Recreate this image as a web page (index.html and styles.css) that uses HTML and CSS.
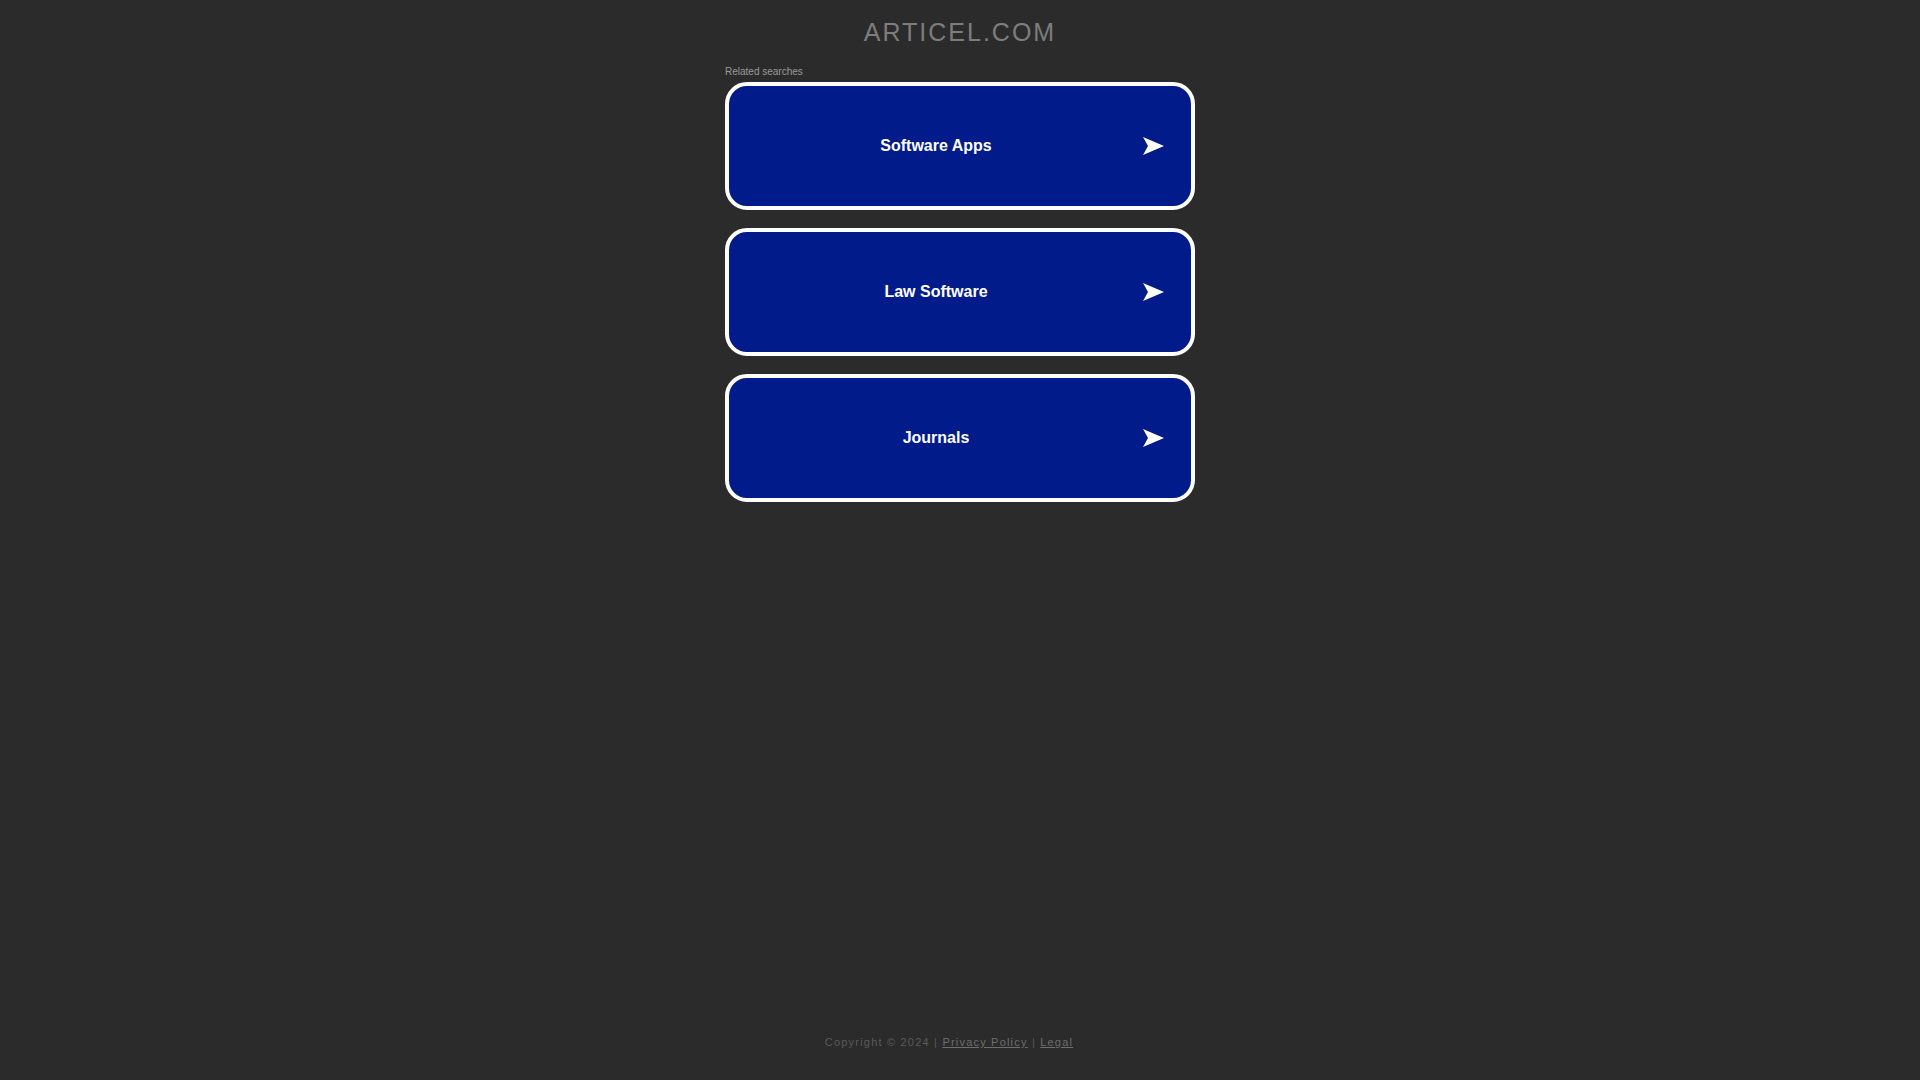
FILE: index.html
```html
<!DOCTYPE html>
<html lang="en">
<head>
<meta charset="utf-8">
<title>articel.com</title>
<link rel="stylesheet" href="styles.css">
</head>
<body>
<div class="page">
  <h1 class="title">ARTICEL.COM</h1>
  <main class="content">
    <div class="label">Related searches</div>
    <div class="list">
      <a class="item" href="#"><span class="item-text">Software Apps</span><svg class="arrow" viewBox="0 0 21 18" width="21" height="18"><path d="M0 0 L21 9 L0 18 L5 9 Z" fill="#fff"/></svg></a>
      <a class="item" href="#"><span class="item-text">Law Software</span><svg class="arrow" viewBox="0 0 21 18" width="21" height="18"><path d="M0 0 L21 9 L0 18 L5 9 Z" fill="#fff"/></svg></a>
      <a class="item" href="#"><span class="item-text">Journals</span><svg class="arrow" viewBox="0 0 21 18" width="21" height="18"><path d="M0 0 L21 9 L0 18 L5 9 Z" fill="#fff"/></svg></a>
    </div>
  </main>
  <footer class="footer">Copyright © 2024 | <a href="#">Privacy Policy</a> | <a href="#">Legal</a></footer>
</div>
</body>
</html>
```

FILE: styles.css
```css
html, body {
  margin: 0;
  padding: 0;
  height: 100%;
}
body {
  background: #2b2b2b;
  font-family: "Liberation Sans", Arial, sans-serif;
}
.page {
  height: 100%;
  display: flex;
  flex-direction: column;
  align-items: center;
}
.title {
  margin: 18px 0 0;
  font-size: 25px;
  font-weight: normal;
  line-height: 1.15;
  letter-spacing: 2px;
  color: #7d7d7d;
}
.content {
  width: 470px;
  margin-top: 19px;
}
.label {
  font-size: 10px;
  line-height: 11.5px;
  color: #9a9a9a;
  margin-bottom: 5px;
}
.list {
  display: flex;
  flex-direction: column;
  gap: 18px;
}
.item {
  display: flex;
  align-items: center;
  height: 128px;
  box-sizing: border-box;
  border: 4px solid #fff;
  border-radius: 22px;
  background: #011b8a;
  color: #fff;
  text-decoration: none;
  padding-right: 27px;
}
.item-text {
  flex: 1;
  text-align: center;
  font-size: 16px;
  font-weight: bold;
}
.arrow {
  display: block;
}
.footer {
  margin-top: auto;
  margin-bottom: 32px;
  padding-right: 22px;
  font-size: 11px;
  letter-spacing: 1.2px;
  color: #5a5a5a;
}
.footer a {
  color: #6e6e6e;
}
```
